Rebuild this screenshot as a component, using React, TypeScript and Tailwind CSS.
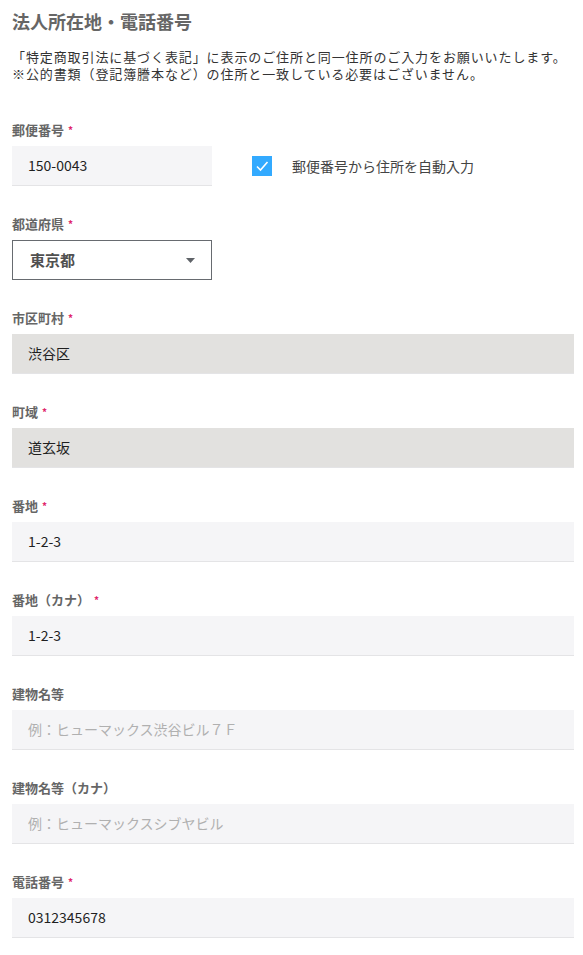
import { useState } from "react";

const FONT = '"Noto Sans CJK JP", "Noto Sans", sans-serif';

interface FieldProps {
  label: string;
  required?: boolean;
  children: React.ReactNode;
}

const Field = ({ label, required, children }: FieldProps) => (
  <div className="mb-[30px]">
    <div className="flex items-start h-4 mb-2 text-[13px] leading-4 font-bold text-[#666]">
      <span>{label}</span>
      {required && <span className="ml-1 mt-[3px] text-[10px] leading-[10px] text-[#e0256b]">*</span>}
    </div>
    {children}
  </div>
);

interface InputProps {
  value?: string;
  placeholder?: string;
  disabled?: boolean;
  narrow?: boolean;
}

const TextInput = ({ value, placeholder, disabled, narrow }: InputProps) => (
  <div
    className={`flex items-center h-10 px-4 border-b border-[#e4e4e6] text-[14px] ${
      disabled ? "bg-[#e2e1df]" : "bg-[#f5f5f7]"
    } ${narrow ? "w-[200px]" : "w-full"}`}
  >
    {value ? (
      <span className="text-[#1f1f1f]">{value}</span>
    ) : (
      <span className="text-[#b0b0b0]">{placeholder}</span>
    )}
  </div>
);

export default function App() {
  const [auto, setAuto] = useState(true);

  return (
    <div className="bg-white min-h-[955px] pl-3 pr-[9px] pt-[9px]" style={{ fontFamily: FONT }}>
      <h2 className="text-[18px] leading-6 font-bold text-[#666]">法人所在地・電話番号</h2>
      <div className="mt-[15px] text-[13px] leading-[17px] tracking-[0.9px] text-[#333] whitespace-nowrap">
        <p>「特定商取引法に基づく表記」に表示のご住所と同一住所のご入力をお願いいたします。</p>
        <p>※公的書類（登記簿謄本など）の住所と一致している必要はございません。</p>
      </div>

      <div className="mt-10">
        <Field label="郵便番号" required>
          <div className="flex items-center">
            <TextInput value="150-0043" narrow />
            <button
              type="button"
              onClick={() => setAuto(!auto)}
              className="ml-10 flex items-center gap-5 text-[14px] text-[#444]"
            >
              <span className="flex items-center justify-center w-5 h-5 bg-[#33aaff]">
                {auto && (
                  <svg width="14" height="12" viewBox="0 0 14 12" fill="none">
                    <path d="M2 6.5 L5.5 10 L12.5 2" stroke="#fff" strokeWidth="1.6" />
                  </svg>
                )}
              </span>
              <span>郵便番号から住所を自動入力</span>
            </button>
          </div>
        </Field>

        <Field label="都道府県" required>
          <div className="flex items-center justify-between w-[200px] h-10 pl-[17px] pr-[16px] border border-[#676b70] bg-white">
            <span className="text-[15px] font-bold text-[#505050]">東京都</span>
            <svg width="9" height="5" viewBox="0 0 9 5">
              <path d="M0 0 H9 L4.5 5 Z" fill="#5f6368" />
            </svg>
          </div>
        </Field>

        <Field label="市区町村" required>
          <TextInput value="渋谷区" disabled />
        </Field>

        <Field label="町域" required>
          <TextInput value="道玄坂" disabled />
        </Field>

        <Field label="番地" required>
          <TextInput value="1-2-3" />
        </Field>

        <Field label="番地（カナ）" required>
          <TextInput value="1-2-3" />
        </Field>

        <Field label="建物名等">
          <TextInput placeholder="例：ヒューマックス渋谷ビル７Ｆ" />
        </Field>

        <Field label="建物名等（カナ）">
          <TextInput placeholder="例：ヒューマックスシブヤビル" />
        </Field>

        <Field label="電話番号" required>
          <TextInput value="0312345678" />
        </Field>
      </div>
    </div>
  );
}
